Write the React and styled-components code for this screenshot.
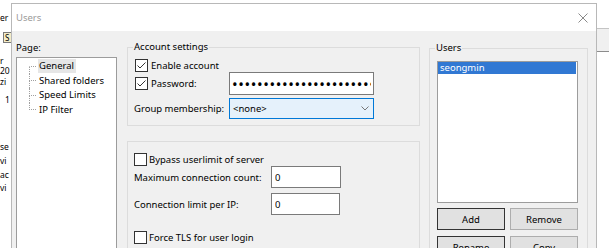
import React from 'react';
import styled, { createGlobalStyle } from 'styled-components';

const GlobalStyle = createGlobalStyle`
    * { box-sizing: border-box; }
    html, body {
        margin: 0;
        padding: 0;
        background: #ffffff;
    }
    body {
        font-family: "Noto Sans", "Open Sans", sans-serif;
        font-size: 9.5px;
        color: #000000;
    }
`;

const backLines = [
    { text: 'r', gap: 13 },
    { text: '20', gap: 0 },
    { text: 'zi', gap: 0 },
    { text: '1', gap: 8, indent: 5 },
    { text: 'se', gap: 36 },
    { text: 'vi', gap: 4 },
    { text: 'ac', gap: 3 },
    { text: 'vi', gap: 3 },
];

const pages = ['General', 'Shared folders', 'Speed Limits', 'IP Filter'];

function CheckBox({ checked }) {
    return (
        <Box>
            {checked && (
                <svg width="11" height="11" viewBox="0 0 11 11">
                    <path d="M1.5 5.5 L4 8 L9.5 2.5" fill="none" stroke="#333" strokeWidth="1" />
                </svg>
            )}
        </Box>
    );
}

function App() {
    return (
        <Desktop>
            <GlobalStyle />
            <BackWindow>
                <BackLeft>
                    <BackLine $gap={0}>er</BackLine>
                    <ToolbarBox>S</ToolbarBox>
                    {backLines.map((l, i) => (
                        <BackLine key={i} $gap={l.gap} $indent={l.indent}>{l.text}</BackLine>
                    ))}
                </BackLeft>
                <BackRight />
            </BackWindow>

            <Dialog>
                <TitleBar>
                    <Title>Users</Title>
                    <svg width="10" height="10" viewBox="0 0 10 10">
                        <path d="M0.5 0.5 L9.5 9.5 M9.5 0.5 L0.5 9.5" stroke="#8a8a8a" strokeWidth="1" />
                    </svg>
                </TitleBar>

                <Body>
                    {/* page tree */}
                    <LeftColumn>
                        <PageLabel>Page:</PageLabel>
                        <Tree>
                            {pages.map((p, i) => (
                                <TreeRow key={p}>
                                    <Guide>
                                        <GuideHalf $line={i > 0} $branch />
                                        <GuideHalf $line={i < pages.length - 1} />
                                    </Guide>
                                    <TreeLabel $selected={i === 0}>{p}</TreeLabel>
                                </TreeRow>
                            ))}
                        </Tree>
                    </LeftColumn>

                    <MiddleColumn>
                        <GroupBox $top={9} $pad="4px 0 6px 6px">
                            <Legend>Account settings</Legend>
                            <Row $h={14}>
                                <CheckLabel>
                                    <CheckBox checked />
                                    Enable account
                                </CheckLabel>
                            </Row>
                            <Row $h={23}>
                                <CheckLabel $w={94}>
                                    <CheckBox checked />
                                    Password:
                                </CheckLabel>
                                <PasswordInput type="password" value="secretpassword1234567890abcdef" readOnly />
                            </Row>
                            <Row $h={21} $gap={3}>
                                <FieldLabel $w={95}>Group membership:</FieldLabel>
                                <Combo>
                                    <span>&lt;none&gt;</span>
                                    <svg width="8" height="5" viewBox="0 0 8 5">
                                        <path d="M0.5 0.5 L4 4 L7.5 0.5" fill="none" stroke="#777" strokeWidth="1" />
                                    </svg>
                                </Combo>
                            </Row>
                        </GroupBox>

                        <GroupBox $top={15} $pad="10px 0 0 6px" $grow>
                            <Row $h={14}>
                                <CheckLabel $tight>
                                    <CheckBox />
                                    Bypass userlimit of server
                                </CheckLabel>
                            </Row>
                            <Row $h={22}>
                                <FieldLabel $w={137}>Maximum connection count:</FieldLabel>
                                <TextInput $w={70} $h={22} value="0" readOnly />
                            </Row>
                            <Row $h={22} $gap={5}>
                                <FieldLabel $w={137}>Connection limit per IP:</FieldLabel>
                                <TextInput $w={69} $h={22} value="0" readOnly />
                            </Row>
                            <Row $h={14} $gap={15}>
                                <CheckLabel $tight>
                                    <CheckBox />
                                    Force TLS for user login
                                </CheckLabel>
                            </Row>
                        </GroupBox>
                    </MiddleColumn>

                    <UsersColumn>
                        <GroupBox $top={10} $pad="6px 0 0 7px" $grow>
                            <Legend $indent={-2}>Users</Legend>
                            <ListBox>
                                <ListItem $selected>seongmin</ListItem>
                            </ListBox>
                            <ButtonRow $gap={5}>
                                <Button $default>Add</Button>
                                <Button>Remove</Button>
                            </ButtonRow>
                            <ButtonRow $gap={6}>
                                <Button $default>Rename</Button>
                                <Button>Copy</Button>
                            </ButtonRow>
                        </GroupBox>
                    </UsersColumn>
                </Body>
            </Dialog>
        </Desktop>
    );
}

const Desktop = styled.div`
    position: relative;
    width: 609px;
    height: 248px;
    overflow: hidden;
    background: #ffffff;
`;

const BackWindow = styled.div`
    display: flex;
    height: 100%;
`;

const BackLeft = styled.div`
    width: 11px;
    overflow: hidden;
    display: flex;
    flex-direction: column;
    padding-top: 13px;
    white-space: nowrap;
`;

const BackLine = styled.div`
    height: 10.5px;
    line-height: 10.5px;
    font-size: 8.5px;
    overflow: hidden;
    margin-top: ${p => p.$gap}px;
    padding-left: ${p => p.$indent || 0}px;
`;

const ToolbarBox = styled.div`
    width: 9px;
    height: 11px;
    margin: 8px 0 0 3px;
    border: 1px solid #7a7a7a;
    border-right: none;
    background: #f3ecc8;
    font-size: 8px;
    line-height: 9px;
    padding-left: 1px;
`;

const BackRight = styled.div`
    margin-left: auto;
    width: 12px;
    height: 24px;
    margin-top: 28px;
    background: #f0f0f0;
    border-top: 1px solid #c4c4c4;
    border-bottom: 1px solid #8c8c8c;
`;

const Dialog = styled.div`
    position: absolute;
    left: 11px;
    top: 3px;
    width: 586px;
    height: 270px;
    display: flex;
    flex-direction: column;
    background: #f0f0f0;
    border: 1px solid #b8b8b8;
`;

const TitleBar = styled.div`
    height: 27px;
    flex-shrink: 0;
    display: flex;
    align-items: center;
    justify-content: space-between;
    padding: 0 8px 0 4px;
    background: #ffffff;
`;

const Title = styled.span`
    color: #9a9a9a;
    font-size: 9.5px;
`;

const Body = styled.div`
    flex: 1;
    display: flex;
    padding: 0 8px 0 4px;
`;

const LeftColumn = styled.div`
    width: 101px;
    padding-top: 10px;
    display: flex;
    flex-direction: column;
`;

const PageLabel = styled.div`
    height: 14px;
    line-height: 14px;
`;

const Tree = styled.div`
    flex: 1;
    margin-top: 2px;
    padding-top: 1px;
    background: #ffffff;
    border: 1px solid #9c9c9c;
`;

const TreeRow = styled.div`
    display: flex;
    height: 14.5px;
    padding-left: 12px;
`;

const Guide = styled.div`
    width: 7px;
    display: flex;
    flex-direction: column;
`;

const GuideHalf = styled.div`
    flex: 1;
    border-left: 1px ${p => (p.$line ? 'dotted #a0a0a0' : 'solid transparent')};
    border-bottom: ${p => (p.$branch ? '1px dotted #a0a0a0' : 'none')};
`;

const TreeLabel = styled.span`
    align-self: center;
    margin-left: 2px;
    padding: 0 2px 0 1px;
    line-height: 14px;
    white-space: nowrap;
    background: ${p => (p.$selected ? '#e6e6e6' : 'transparent')};
`;

const MiddleColumn = styled.div`
    width: 293px;
    margin-left: 10px;
    display: flex;
    flex-direction: column;
`;

const UsersColumn = styled.div`
    width: 159px;
    margin-left: 9px;
    display: flex;
    flex-direction: column;
`;

const GroupBox = styled.fieldset`
    margin: ${p => p.$top}px 0 0;
    padding: ${p => p.$pad};
    min-width: 0;
    border: 1px solid #dcdcdc;
    flex: ${p => (p.$grow ? 1 : 'none')};
`;

const Legend = styled.legend`
    margin-left: ${p => p.$indent ?? -1}px;
    padding: 0 1px;
    line-height: 14px;
`;

const Row = styled.div`
    display: flex;
    align-items: center;
    height: ${p => p.$h}px;
    margin-top: ${p => p.$gap || 0}px;
`;

const CheckLabel = styled.label`
    display: flex;
    align-items: center;
    gap: ${p => (p.$tight ? 2 : 3)}px;
    margin-left: ${p => (p.$tight ? 0 : 1)}px;
    width: ${p => (p.$w ? `${p.$w}px` : 'auto')};
    flex-shrink: 0;
    white-space: nowrap;
`;

const Box = styled.span`
    width: 13px;
    height: 13px;
    flex-shrink: 0;
    display: flex;
    align-items: center;
    justify-content: center;
    background: #ffffff;
    border: 1px solid #333333;
`;

const FieldLabel = styled.span`
    width: ${p => p.$w}px;
    flex-shrink: 0;
    white-space: nowrap;
`;

const TextInput = styled.input`
    width: ${p => p.$w}px;
    height: ${p => p.$h}px;
    margin: 0;
    padding: 0 3px;
    border: 1px solid #7a7a7a;
    background: #ffffff;
    font: inherit;
    color: #000000;
    outline: none;
`;

const PasswordInput = styled.input`
    width: 145px;
    height: 23px;
    margin: 0;
    padding: 0 2px;
    border: 1px solid #7a7a7a;
    background: #ffffff;
    font-family: "Noto Sans", sans-serif;
    font-size: 15px;
    letter-spacing: 0.6px;
    color: #000000;
    outline: none;
`;

const Combo = styled.div`
    width: 145px;
    height: 21px;
    display: flex;
    align-items: center;
    justify-content: space-between;
    padding: 0 4px 0 3px;
    background: #e5f1fb;
    border: 1px solid #0078d7;
`;

const ListBox = styled.div`
    width: 141px;
    height: 142px;
    flex-shrink: 0;
    background: #ffffff;
    border: 1px solid #9c9c9c;
`;

const ListItem = styled.div`
    height: 12px;
    line-height: 12px;
    margin-right: 1px;
    padding-left: 2px;
    background: ${p => (p.$selected ? '#3178d3' : 'transparent')};
    color: ${p => (p.$selected ? '#ffffff' : '#000000')};
`;

const ButtonRow = styled.div`
    display: flex;
    gap: 5px;
    margin-top: ${p => p.$gap}px;
`;

const Button = styled.button`
    width: 68px;
    height: 22px;
    margin: 0;
    padding: 0;
    font: inherit;
    color: #000000;
    background: #e1e1e1;
    border: 1px solid ${p => (p.$default ? '#333333' : '#adadad')};
`;

export default App;
